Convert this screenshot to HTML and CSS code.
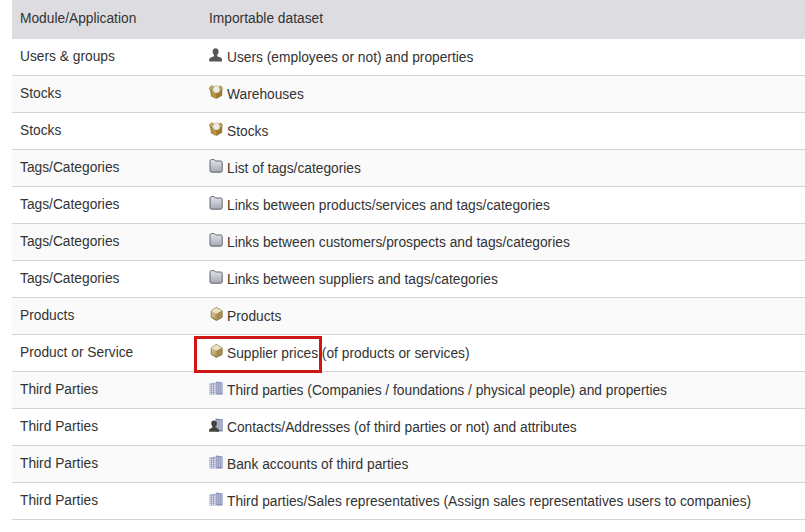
FILE: index.html
```html
<!DOCTYPE html>
<html lang="en">
<head>
<meta charset="utf-8">
<title>Importable datasets</title>
<link rel="stylesheet" href="styles.css">
</head>
<body>
<svg class="defs" width="0" height="0" aria-hidden="true">
  <defs>
    <linearGradient id="boxg" x1="0" y1="0" x2="1" y2="1"><stop offset="0" stop-color="#efe2b8"/><stop offset="1" stop-color="#8a6c2c"/></linearGradient>
    <linearGradient id="foldg" x1="0" y1="0" x2="0" y2="1"><stop offset="0" stop-color="#e2e5ec"/><stop offset="1" stop-color="#a4a8b4"/></linearGradient>
    <symbol id="i-user" viewBox="0 0 14 14">
      <path d="M6.6 0.2C4.7 0.2 3.6 1.6 3.6 3.6C3.6 5.1 4.3 6.2 5 7V8.2L1.2 9.7C0.5 10 0.2 10.6 0.2 11.3V13.6H13V11.3C13 10.6 12.7 10 12 9.7L8.2 8.2V7C8.9 6.2 9.6 5.1 9.6 3.6C9.6 1.6 8.5 0.2 6.6 0.2Z" fill="#5a5653"/>
    </symbol>
    <symbol id="i-stock" viewBox="0 0 14 14">
      <path d="M1.4 4.6L7 7.6L12.8 4.6V10.4L7.4 13.6L2.4 11.2Z" fill="#b8933f" stroke="#7f6428" stroke-width=".6"/>
      <path d="M7.4 7.4V13.6L12.8 10.4V4.6Z" fill="#9b7a30"/>
      <circle cx="7.4" cy="4.4" r="3.7" fill="#ecebe4" stroke="#a89a6a" stroke-width=".5"/>
      <path d="M0.2 3L3 0.4L4.6 2.2L1.6 5.6Z" fill="#c9a85a" stroke="#7a5f24" stroke-width=".5"/>
      <path d="M13.8 3.2L11.6 0.8L10.2 2L12.4 5.2Z" fill="#c9a85a" stroke="#7a5f24" stroke-width=".5"/>
    </symbol>
    <symbol id="i-folder" viewBox="0 0 14 14">
      <path d="M1 2.2C1 1.2 1.6.6 2.4.6H5.2L6.6 2H11.8C12.6 2 13.2 2.6 13.2 3.4V11.8C13.2 12.6 12.6 13.2 11.8 13.2H2.4C1.6 13.2 1 12.6 1 11.8Z" fill="url(#foldg)" stroke="#55585f" stroke-width=".9"/>
    </symbol>
    <symbol id="i-product" viewBox="0 0 14 14">
      <path d="M7.4 .5L12.8 3.5Q13.2 3.8 13.2 4.3V10Q13.2 10.5 12.8 10.7L7.4 13.5L2.6 10.7Q2.2 10.5 2.2 10V4.3Q2.2 3.8 2.6 3.5Z" fill="url(#boxg)" stroke="#6f5a2a" stroke-width=".7"/>
      <path d="M2.4 3.8L7.6 6.8L13 3.8L7.4 .7Z" fill="#efe3bd"/>
      <path d="M7.6 6.8V13.3L13 10.4V3.8Z" fill="#a58b4c"/>
    </symbol>
    <symbol id="i-company" viewBox="0 0 14 14">
      <path d="M0.3 2.6L7 1.6V13.6H0.3Z" fill="#b4bad8"/>
      <path d="M7 .4L13.7 1.4V13.6H7Z" fill="#8f97bc"/>
      <path d="M.8 4.4H6.4M.8 6.4H6.4M.8 8.4H6.4M.8 10.4H6.4M.8 12.4H6.4M7.6 3H13.2M7.6 5H13.2M7.6 7H13.2M7.6 9H13.2M7.6 11H13.2" stroke="#eceef8" stroke-width=".8"/>
      <path d="M2.4 2.4V13.6M4.5 2V13.6M9.3 .8V13.6M11.4 1.1V13.6" stroke="#717aa3" stroke-width=".5"/>
    </symbol>
    <symbol id="i-contact" viewBox="0 0 14 14">
      <path d="M6.5 .4L13.7 1.2V13.6H6.5Z" fill="#7e86ad"/>
      <path d="M7.6 3H13.2M7.6 5H13.2M7.6 7H13.2M7.6 9H13.2M7.6 11H13.2" stroke="#e6e8f4" stroke-width=".8"/>
      <path d="M5 2.6C3.2 2.6 2.2 3.9 2.2 5.6C2.2 6.8 2.8 7.8 3.4 8.4V9.6L1 10.8C.4 11.1.1 11.6.1 12.2V13.8H10V12.2C10 11.6 9.7 11.1 9.2 10.8L6.6 9.6V8.4C7.2 7.8 7.8 6.8 7.8 5.6C7.8 3.9 6.8 2.6 5 2.6Z" fill="#45413e"/>
    </symbol>
  </defs>
</svg>
<main class="page">
  <div class="frame">
    <table class="data">
      <thead>
        <tr><th class="col-module">Module/Application</th><th>Importable dataset</th></tr>
      </thead>
      <tbody>
        <tr><td>Users &amp; groups</td><td class="set"><svg class="icon"><use href="#i-user"/></svg>Users (employees or not) and properties</td></tr>
        <tr><td>Stocks</td><td class="set"><svg class="icon"><use href="#i-stock"/></svg>Warehouses</td></tr>
        <tr><td>Stocks</td><td class="set"><svg class="icon"><use href="#i-stock"/></svg>Stocks</td></tr>
        <tr><td>Tags/Categories</td><td class="set"><svg class="icon"><use href="#i-folder"/></svg>List of tags/categories</td></tr>
        <tr><td>Tags/Categories</td><td class="set"><svg class="icon"><use href="#i-folder"/></svg>Links between products/services and tags/categories</td></tr>
        <tr><td>Tags/Categories</td><td class="set"><svg class="icon"><use href="#i-folder"/></svg>Links between customers/prospects and tags/categories</td></tr>
        <tr><td>Tags/Categories</td><td class="set"><svg class="icon"><use href="#i-folder"/></svg>Links between suppliers and tags/categories</td></tr>
        <tr><td>Products</td><td class="set"><svg class="icon"><use href="#i-product"/></svg>Products</td></tr>
        <tr><td>Product or Service</td><td class="set"><svg class="icon"><use href="#i-product"/></svg>Supplier prices (of products or services)</td></tr>
        <tr><td>Third Parties</td><td class="set"><svg class="icon"><use href="#i-company"/></svg>Third parties (Companies / foundations / physical people) and properties</td></tr>
        <tr><td>Third Parties</td><td class="set"><svg class="icon"><use href="#i-contact"/></svg>Contacts/Addresses (of third parties or not) and attributes</td></tr>
        <tr><td>Third Parties</td><td class="set"><svg class="icon"><use href="#i-company"/></svg>Bank accounts of third parties</td></tr>
        <tr><td>Third Parties</td><td class="set"><svg class="icon"><use href="#i-company"/></svg>Third parties/Sales representatives (Assign sales representatives users to companies)</td></tr>
      </tbody>
    </table>
    <div class="highlight"></div>
  </div>
</main>
</body>
</html>
```
FILE: styles.css
```css
html, body {
  margin: 0;
  padding: 0;
  background: #ffffff;
}
.defs {
  position: absolute;
}
.page {
  padding-left: 12px;
  height: 532px;
  overflow: hidden;
}
.frame {
  position: relative;
}
.data {
  width: 793px;
  table-layout: fixed;
  border-collapse: separate;
  border-spacing: 0;
  font-family: "Liberation Sans", Arial, sans-serif;
  font-size: 13.77px;
  line-height: 20px;
  color: #333333;
}
.data th {
  height: 39px;
  box-sizing: border-box;
  padding: 0 8px 1px;
  background: #dddde1;
  font-weight: normal;
  text-align: left;
}
.col-module {
  width: 189px;
  box-sizing: border-box;
}
.data td {
  height: 37px;
  box-sizing: border-box;
  padding: 0 8px;
  border-bottom: 1px solid #d4d4d4;
  white-space: nowrap;
}
.data td.set {
  padding: 2px 8px 0;
}
.data tbody tr:nth-child(even) {
  background: #fafafa;
}
.icon {
  display: inline-block;
  width: 14px;
  height: 14px;
  margin: -6px 4px 0 0;
  vertical-align: middle;
}
.highlight {
  position: absolute;
  left: 182px;
  top: 336px;
  width: 122px;
  height: 31px;
  border: 3px solid #d01515;
}
```
